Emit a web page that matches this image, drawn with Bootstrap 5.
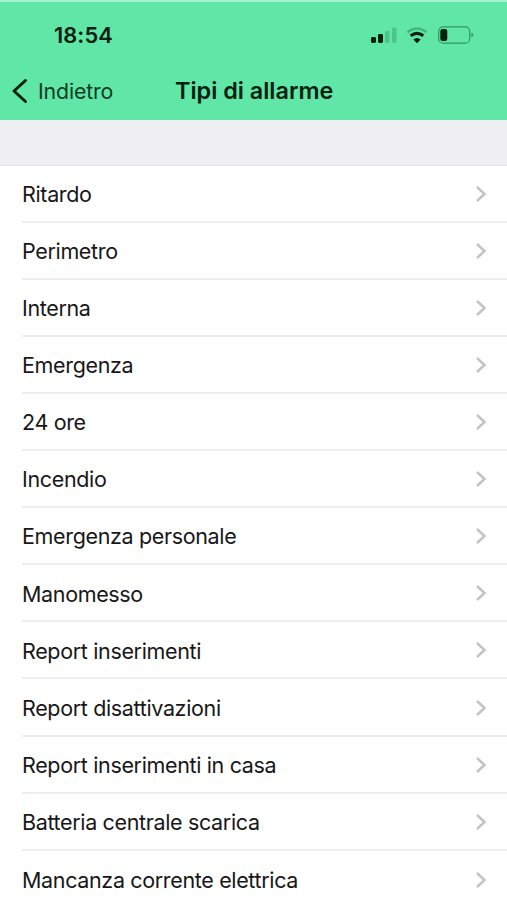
<!DOCTYPE html>
<html lang="it">
<head>
<meta charset="utf-8">
<meta name="viewport" content="width=device-width, initial-scale=1">
<title>Tipi di allarme</title>
<link href="https://cdn.jsdelivr.net/npm/bootstrap@5.3.0/dist/css/bootstrap.min.css" rel="stylesheet">
<style>
  html, body { height: 900px; overflow: hidden; }
  body { font-family: Inter, "Liberation Sans", sans-serif; color: #171717; background: #fff; }
  .app-head { height: 119.5px; background: #60e7a7; border-top: 2px solid #a2f5cf; color: #04200f; }
  .status-row { height: 66px; padding: 0 33px 0 54px; }
  .clock { font-size: 21.8px; font-weight: 600; line-height: 1; letter-spacing: .1px; padding-top: 2px; }
  .title-row { height: 45px; padding: 1px 0 0 11px; }
  .back-link { width: 164px; color: #0c3a22; font-size: 21.3px; letter-spacing: -.15px; line-height: 1; }
  .back-link span { padding-top: 1px; }
  .page-title { font-size: 23.4px; font-weight: 600; letter-spacing: 0; line-height: 1; }
  .section-gap { height: 46px; background: #efeef3; border-bottom: 1px solid #e6e5ea; }
  .alarm-list .list-group-item { height: 57.12px; margin-left: 22px; padding: 1px 20px 0 0; border-color: #eeeeee; border-width: 0 0 2px; color: inherit; background: none; font-size: 21.5px; line-height: 1; letter-spacing: -.35px; }
  .alarm-list .label { padding-top: 2px; }
</style>
</head>
<body>
<header class="app-head">
  <div class="status-row d-flex align-items-center justify-content-between">
    <span class="clock">18:54</span>
    <svg width="104" height="20" viewBox="0 0 104 20" aria-hidden="true">
      <g fill="#04200f">
        <rect x="1" y="12" width="5" height="6" rx="1.4"/>
        <rect x="8" y="9" width="5" height="9" rx="1.4"/>
      </g>
      <g fill="#4cc48a">
        <rect x="15" y="6" width="4.500" height="12" rx="1.4"/>
        <rect x="22" y="2.500" width="4.500" height="15.500" rx="1.4"/>
      </g>
      <path d="M37.500 7.200Q47 -.2 56.500 7.200" fill="none" stroke="#45b681" stroke-width="2.400"/>
      <path d="M40.700 10.800Q47 5.800 53.300 10.800" fill="none" stroke="#04200f" stroke-width="3.200"/>
      <path d="M43.300 14.400Q47 11.400 50.700 14.400L47 18.200Z" fill="#04200f"/>
      <rect x="68.700" y="1.800" width="31" height="16.400" rx="4.500" fill="none" stroke="#36945f" stroke-width="1.200"/>
      <rect x="70.300" y="4" width="7" height="12" rx="2.200" fill="#04200f"/>
      <path d="M101.300 7.800Q103.300 8.400 103.300 10T101.300 12.200Z" fill="#36945f"/>
    </svg>
  </div>
  <div class="title-row d-flex align-items-center">
    <a href="#" class="back-link d-flex align-items-center text-decoration-none">
      <svg class="me-2 flex-shrink-0" width="19" height="26" viewBox="0 0 19 26" aria-hidden="true"><path d="M14.500 2.500L3 13L14.500 23.500" fill="none" stroke="#04200f" stroke-width="3" stroke-linecap="round" stroke-linejoin="round"/></svg>
      <span>Indietro</span>
    </a>
    <h1 class="page-title m-0">Tipi di allarme</h1>
  </div>
</header>
<div class="section-gap"></div>
<main id="alarms" class="alarm-list list-group list-group-flush">
</main>
<template id="alarmRow">
  <a href="#" class="list-group-item d-flex align-items-center justify-content-between">
    <span class="label"></span>
    <svg width="12" height="18" viewBox="0 0 12 18" aria-hidden="true"><path d="M2 2L9.500 9L2 16" fill="none" stroke="#c3c3c5" stroke-width="2.500"/></svg>
  </a>
</template>
<script src="https://cdn.jsdelivr.net/npm/bootstrap@5.3.0/dist/js/bootstrap.bundle.min.js"></script>
<script>
  const types = ["Ritardo", "Perimetro", "Interna", "Emergenza", "24 ore", "Incendio", "Emergenza personale", "Manomesso", "Report inserimenti", "Report disattivazioni", "Report inserimenti in casa", "Batteria centrale scarica", "Mancanza corrente elettrica"];
  const list = document.getElementById("alarms");
  const row = document.getElementById("alarmRow");
  types.forEach(name => {
    const item = row.content.cloneNode(true);
    item.querySelector(".label").textContent = name;
    list.appendChild(item);
  });
</script>
</body>
</html>
